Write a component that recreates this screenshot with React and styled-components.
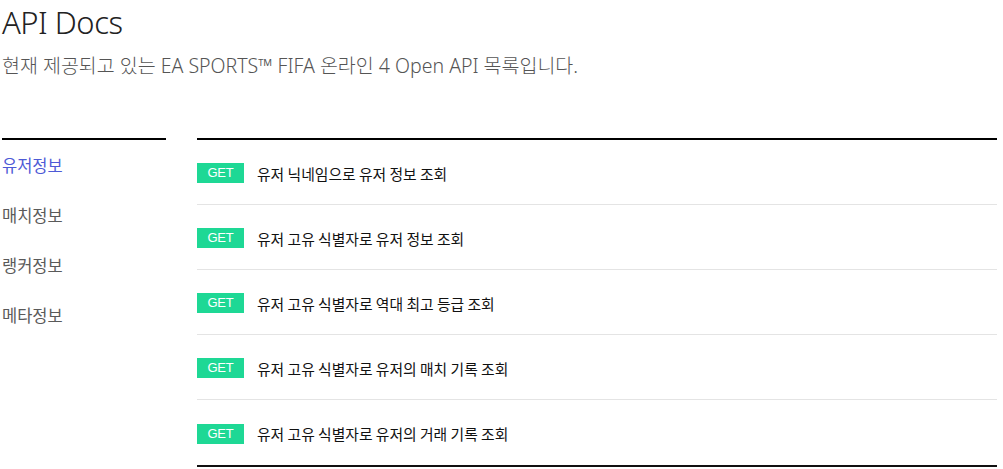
import React from "react";
import styled, { createGlobalStyle } from "styled-components";

const GlobalStyle = createGlobalStyle`
    body {
        margin: 0;
        background: #fff;
        font-family: "Noto Sans", "Noto Sans CJK KR", sans-serif;
    }
`;

const Page = styled.div`
    padding: 0 6px 0 2px;
`;

const Title = styled.h1`
    margin: 0;
    padding-top: 3px;
    font-size: 31px;
    font-weight: 300;
    line-height: 38px;
    color: #222;
    letter-spacing: -0.5px;
`;

const Subtitle = styled.p`
    margin: 12px 0 0;
    font-size: 19.5px;
    font-weight: 300;
    line-height: 26px;
    color: #555;
`;

const Content = styled.div`
    display: flex;
    gap: 31px;
    margin-top: 59px;
`;

const SideNav = styled.ul`
    width: 164px;
    flex-shrink: 0;
    margin: 0;
    padding: 10px 0 0;
    list-style: none;
    border-top: 2px solid #000;
`;

const NavItem = styled.li`
    height: 50px;
    line-height: 30px;
    font-family: "Noto Sans CJK KR", sans-serif;
    font-size: 16.5px;
    color: ${(props) => (props.active ? "#4e5ad6" : "#5a5a5a")};
`;

const ApiList = styled.ul`
    flex: 1;
    margin: 0;
    padding: 0;
    list-style: none;
    border-top: 2px solid #000;
    border-bottom: 2px solid #111;
`;

const ApiRow = styled.li`
    display: flex;
    align-items: center;
    gap: 13px;
    height: 65px;
    padding-top: 2px;
    box-sizing: border-box;
    border-bottom: 1px solid #e4e4e4;
    &:last-child {
        border-bottom: none;
    }
`;

const Method = styled.span`
    width: 47px;
    height: 20px;
    line-height: 20px;
    text-align: center;
    background: #1ed895;
    color: #fff;
    font-family: "Liberation Sans", Arial, sans-serif;
    font-size: 13px;
    letter-spacing: -0.2px;
`;

const ApiName = styled.span`
    font-family: "Noto Sans CJK KR", sans-serif;
    font-size: 14.8px;
    color: #111;
`;

const navItems = ["유저정보", "매치정보", "랭커정보", "메타정보"];

const apis = [
    "유저 닉네임으로 유저 정보 조회",
    "유저 고유 식별자로 유저 정보 조회",
    "유저 고유 식별자로 역대 최고 등급 조회",
    "유저 고유 식별자로 유저의 매치 기록 조회",
    "유저 고유 식별자로 유저의 거래 기록 조회",
];

const App = () => {
    return (
        <Page>
            <GlobalStyle />
            <Title>API Docs</Title>
            <Subtitle>
                현재 제공되고 있는 EA SPORTS™ FIFA 온라인 4 Open API 목록입니다.
            </Subtitle>
            <Content>
                <SideNav>
                    {navItems.map((item, index) => (
                        <NavItem key={item} active={index === 0}>
                            {item}
                        </NavItem>
                    ))}
                </SideNav>
                <ApiList>
                    {apis.map((name) => (
                        <ApiRow key={name}>
                            <Method>GET</Method>
                            <ApiName>{name}</ApiName>
                        </ApiRow>
                    ))}
                </ApiList>
            </Content>
        </Page>
    );
};

export default App;
